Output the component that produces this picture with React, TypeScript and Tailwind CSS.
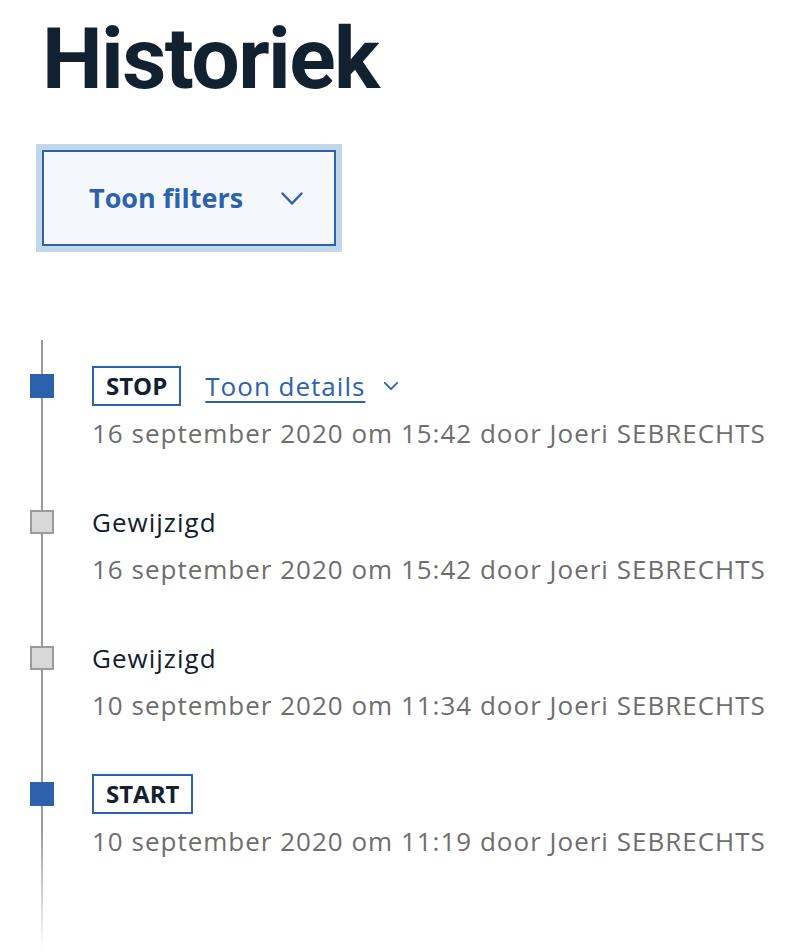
type Entry = {
  kind: "tag" | "text";
  label: string;
  date: string;
  active: boolean;
  details?: boolean;
};

const entries: Entry[] = [
  { kind: "tag", label: "STOP", date: "16 september 2020 om 15:42 door Joeri SEBRECHTS", active: true, details: true },
  { kind: "text", label: "Gewijzigd", date: "16 september 2020 om 15:42 door Joeri SEBRECHTS", active: false },
  { kind: "text", label: "Gewijzigd", date: "10 september 2020 om 11:34 door Joeri SEBRECHTS", active: false },
  { kind: "tag", label: "START", date: "10 september 2020 om 11:19 door Joeri SEBRECHTS", active: true },
];

const font = { fontFamily: '"Open Sans", "Noto Sans", sans-serif' };

function Chevron({ w, h, stroke }: { w: number; h: number; stroke: number }) {
  return (
    <svg width={w} height={h} viewBox={`0 0 ${w} ${h}`} fill="none" stroke="currentColor" strokeWidth={stroke} strokeLinecap="round" strokeLinejoin="round">
      <polyline points={`${stroke},${stroke} ${w / 2},${h - stroke} ${w - stroke},${stroke}`} />
    </svg>
  );
}

export default function App() {
  return (
    <div className="min-h-[952px] bg-white pl-[42px] pt-[4px] text-[#112130]" style={font}>
      <h1 className="text-[86px] font-bold leading-[110px] tracking-[-1.6px]" style={{ fontFamily: 'Roboto, "Open Sans", sans-serif' }}>
        Historiek
      </h1>

      <div className="mt-[36px] inline-block">
        <button className="flex h-[96px] w-[294px] items-center gap-[37px] border-2 border-[#2c62ad] bg-[#f4f7fb] pl-[45px] text-[27px] font-bold text-[#2c62ad] outline outline-[6px] outline-[#c3d7ea]">
          <span>Toon filters</span>
          <Chevron w={24} h={15} stroke={2.5} />
        </button>
      </div>

      <div className="relative mt-[94px] min-h-[610px] pt-[26px]">
        <div className="absolute left-0 top-0 h-full w-[2px] -translate-x-1/2 bg-gradient-to-b from-[#9a9a9a] from-80% to-transparent" />
        <div className="flex flex-col gap-[52px]">
          {entries.map((e, i) => (
            <div key={i} className="relative pl-[50px]">
              <span
                className={
                  e.active
                    ? "absolute left-[-12px] top-[8px] h-[24px] w-[24px] bg-[#2c62ad]"
                    : "absolute left-[-12px] top-[8px] h-[24px] w-[24px] border-2 border-[#9a9a9a] bg-[#d8d8d8]"
                }
              />
              <div className="flex h-[40px] items-center gap-[24px]">
                {e.kind === "tag" ? (
                  <span className="flex h-[40px] items-center border-2 border-[#2c62ad] px-[12px] text-[24px] font-bold text-[#112130]">
                    {e.label}
                  </span>
                ) : (
                  <span className="text-[26px] tracking-[1px] text-[#112130]">{e.label}</span>
                )}
                {e.details && (
                  <a href="#" className="flex items-center gap-[18px] text-[26px] tracking-[1px] text-[#2c62ad]">
                    <span className="underline underline-offset-[5px] decoration-[1.5px]">Toon details</span>
                    <Chevron w={16} h={10} stroke={1.8} />
                  </a>
                )}
              </div>
              <p className="mt-[10px] text-[26px] leading-[34px] tracking-[1px] text-[#6e6e6e]">{e.date}</p>
            </div>
          ))}
        </div>
      </div>
    </div>
  );
}
